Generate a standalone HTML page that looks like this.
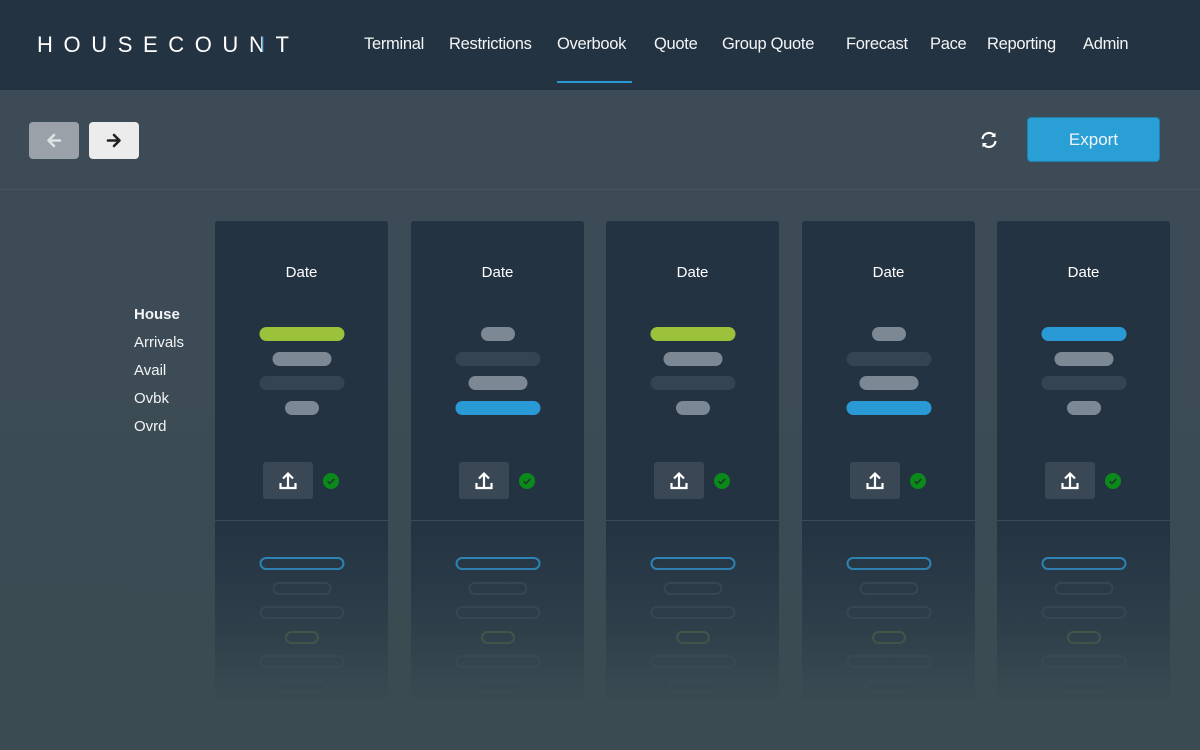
<!DOCTYPE html>
<html><head><meta charset="utf-8"><style>
*{margin:0;padding:0;box-sizing:border-box}
body{width:1200px;height:750px;overflow:hidden;background:#3c4a55;font-family:"Liberation Sans",sans-serif;position:relative;color:#fff}
.hdr{position:absolute;left:0;top:0;width:1200px;height:90px;background:#243342}
.logo{position:absolute;left:37px;top:32px;font-size:22px;letter-spacing:10.6px;font-weight:400}
.nav a{position:absolute;top:35px;font-size:16.5px;color:#f2f4f6;text-decoration:none;white-space:nowrap;letter-spacing:-0.3px}
.ul{position:absolute;left:557px;top:81px;width:75px;height:2px;background:#2a9ad6}
.tb{position:absolute;left:0;top:90px;width:1200px;height:100px;background:#3d4b56;border-bottom:1px solid #465560}
.btn{position:absolute;top:122px;width:50px;height:37px;border-radius:4px}
.exp{position:absolute;left:1027px;top:117px;width:133px;height:45px;background:#2a9fd6;border-radius:4px;border:1px solid #1f80b0;font-size:17px;text-align:center;line-height:43px;color:#eef6fb}
.main{position:absolute;left:0;top:191px;width:1200px;height:559px;background:linear-gradient(#3d4b56,#394b52)}
.card{position:absolute;top:221px;width:173px;height:480px;background:#243342;border-radius:3px 3px 0 0}
.card .d{position:absolute;top:43px;width:100%;text-align:center;font-size:15px}
.bar{position:absolute;height:14px;border-radius:7px;transform:translateX(-50%);left:86.5px}
.ob{position:absolute;height:13px;border-radius:7px;border:2px solid;transform:translateX(-50%);left:86.5px}
.div{position:absolute;left:0;top:299px;width:100%;height:1px;background:#3a4a57}
.up{position:absolute;left:48px;top:241px;width:50px;height:37px;background:#3a4855;border-radius:3px}
.ck{position:absolute;left:108px;top:252px;width:16px;height:16px;border-radius:50%;background:#0a8a1a}
.fade{position:absolute;left:0;top:520px;width:1200px;height:230px;background:linear-gradient(rgba(58,75,82,0) 0%,rgba(58,75,82,0.35) 35%,rgba(58,75,82,0.85) 70%,#3a4b52 82%)}
.lbl{position:absolute;left:134px;font-size:15px;color:#f2f4f6}
</style></head><body>
<div class="hdr">
<div class="logo">HOUSECOU<span style="color:#fff;position:relative">N<span style="position:absolute;left:0;top:0;color:#2a9ad6;clip-path:inset(0 0 0 50%)">N</span></span>T</div>
<div class="nav">
<a style="left:364px">Terminal</a><a style="left:449px">Restrictions</a><a style="left:557px">Overbook</a><a style="left:654px">Quote</a><a style="left:722px">Group Quote</a><a style="left:846px">Forecast</a><a style="left:930px">Pace</a><a style="left:987px">Reporting</a><a style="left:1083px">Admin</a>
</div>
<div class="ul"></div>
</div>
<div class="tb"></div>
<div class="btn" style="left:29px;background:#9aa1a8"><svg width="50" height="37"><path d="M31 18.5H20M25 13l-5.5 5.5L25 24" stroke="#dfe2e5" stroke-width="2.6" fill="none" stroke-linecap="round" stroke-linejoin="round"/></svg></div>
<div class="btn" style="left:89px;background:#ececec"><svg width="50" height="37"><path d="M19 18.5h11M25 13l5.5 5.5L25 24" stroke="#222" stroke-width="2.6" fill="none" stroke-linecap="round" stroke-linejoin="round"/></svg></div>
<svg style="position:absolute;left:979px;top:130px" width="20" height="20" viewBox="0 0 20 20"><path d="M3.5 9a6.5 6.5 0 0 1 12-3M16.5 11a6.5 6.5 0 0 1-12 3" stroke="#fff" stroke-width="2.2" fill="none"/><path d="M16.5 2.5v4.5h-4.5z M3.5 17.5v-4.5h4.5z" fill="#fff"/></svg>
<div class="exp">Export</div>
<div class="main"></div>
<div class="lbl" style="top:306px;font-weight:bold">House</div>
<div class="lbl" style="top:334px">Arrivals</div>
<div class="lbl" style="top:362px">Avail</div>
<div class="lbl" style="top:390px">Ovbk</div>
<div class="lbl" style="top:418px">Ovrd</div>
<div id="cards"></div>
<script>
var G='#9bc23a',GR='#7c8894',DK='#354452',B='#2a9ad6';
var pats=[[[G,85],[GR,59],[DK,85],[GR,34]],[[GR,34],[DK,85],[GR,59],[B,85]],[[G,85],[GR,59],[DK,85],[GR,34]],[[GR,34],[DK,85],[GR,59],[B,85]],[[B,85],[GR,59],[DK,85],[GR,34]]];
var xs=[215,411,606,802,997],h='';
var ob=[['#2a8fc8',85],['#344452',59],['#344452',85],['#4c633d',34],['#344452',85],['#344452',49]];
for(var i=0;i<5;i++){h+='<div class="card" style="left:'+xs[i]+'px"><div class="d">Date</div>';
pats[i].forEach(function(p,j){h+='<div class="bar" style="top:'+(106+j*24.7)+'px;width:'+p[1]+'px;background:'+p[0]+'"></div>'});
h+='<div class="up"><svg width="50" height="37"><path d="M25 25V12M20 16.5l5-5 5 5M17.5 21v5h15v-5" stroke="#fff" stroke-width="2.2" fill="none"/></svg></div><div class="ck"><svg width="16" height="16"><path d="M4.5 8.2l2.3 2.3 4.5-4.5" stroke="#1f3a2a" stroke-width="1.6" fill="none"/></svg></div><div class="div"></div>';
ob.forEach(function(p,j){h+='<div class="ob" style="top:'+(336+j*24.6)+'px;width:'+p[1]+'px;border-color:'+p[0]+'"></div>'});
h+='</div>';}
document.getElementById('cards').innerHTML=h+'<div class="fade"></div>';
</script>
</body></html>
